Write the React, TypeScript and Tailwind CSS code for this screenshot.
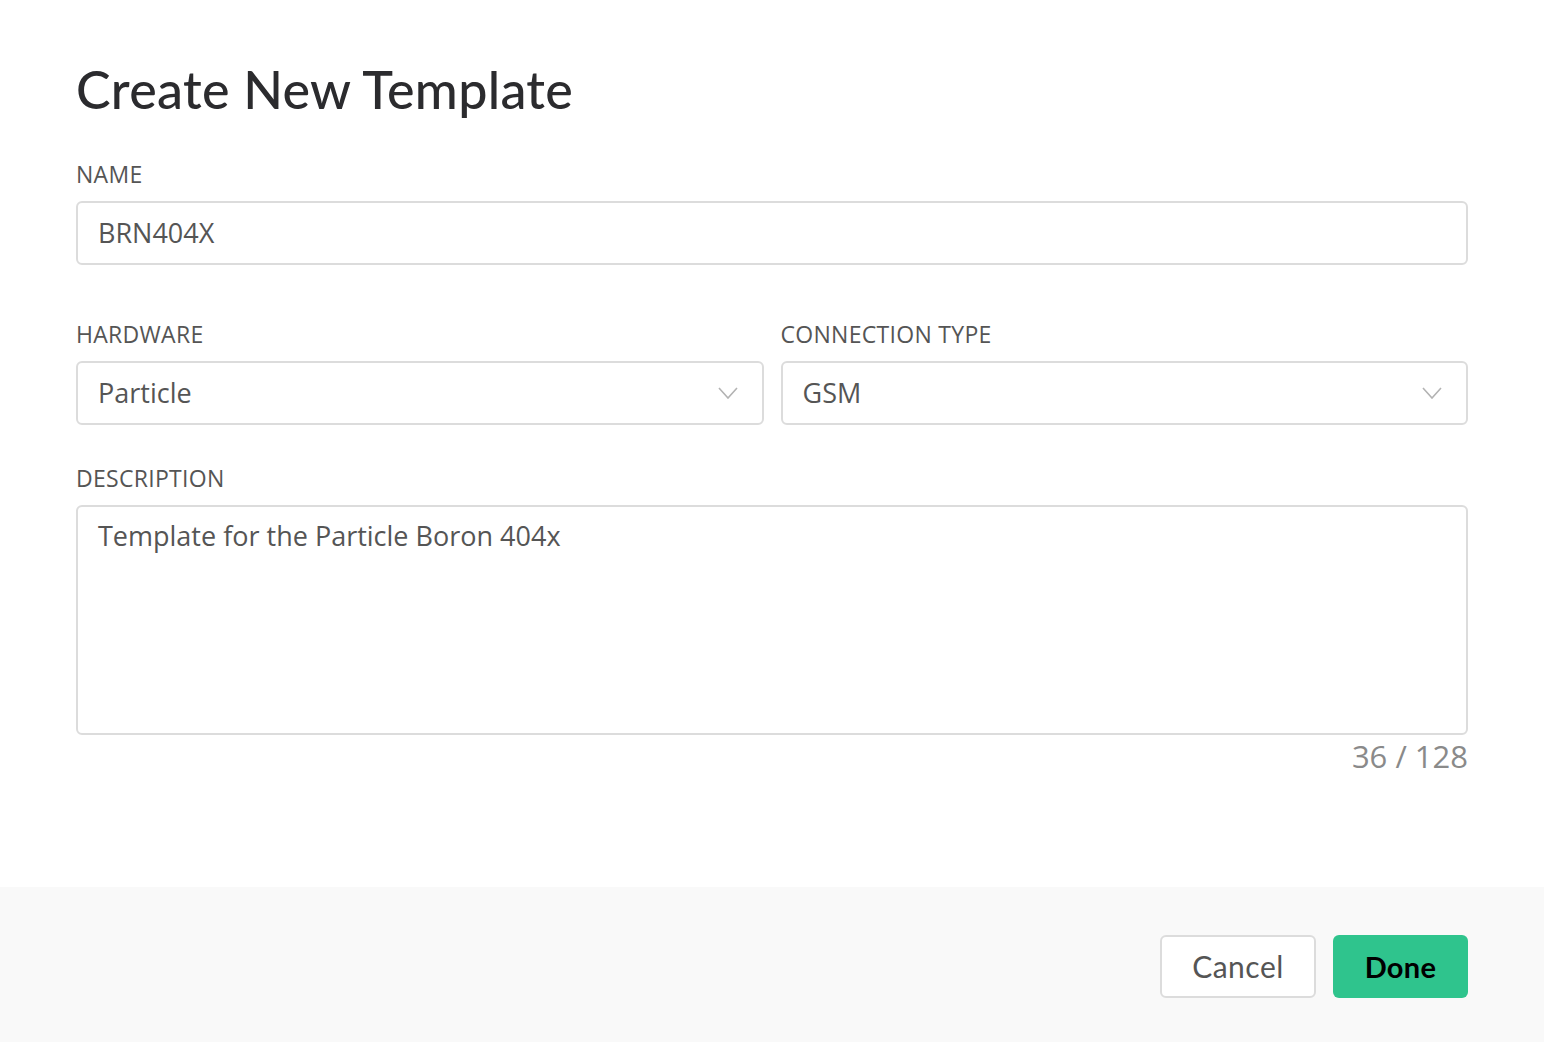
const body = { fontFamily: '"Open Sans", "Noto Sans", sans-serif' }
const head = { fontFamily: 'Lato, "Open Sans", sans-serif' }

function Chevron() {
  return (
    <svg width="20" height="12" viewBox="0 0 20 12" fill="none" className="shrink-0">
      <path d="M1 1l9 10 9-10" stroke="#b3b3b3" strokeWidth="1.6" />
    </svg>
  )
}

function Label({ children }: { children: string }) {
  return <div className="text-[23px] leading-none text-[#555] mb-[15px] tracking-[0.3px]">{children}</div>
}

function Select({ value }: { value: string }) {
  return (
    <div className="flex items-center justify-between h-[64px] pl-[20px] pr-[24px] border-2 border-[#dcdcdc] rounded-[6px] bg-white">
      <span className="text-[27px] text-[#555]">{value}</span>
      <Chevron />
    </div>
  )
}

export default function App() {
  const text = 'Template for the Particle Boron 404x'
  return (
    <div className="w-[1544px] h-[1042px] bg-white flex flex-col" style={body}>
      <div className="flex-1 px-[76px] pt-[63px]">
        <h1 className="text-[52px] leading-none font-medium text-[#2b2b2e] mb-[48px] tracking-[0.3px]" style={head}>
          Create New Template
        </h1>

        <Label>NAME</Label>
        <div className="flex items-center h-[64px] px-[20px] border-2 border-[#dcdcdc] rounded-[6px]">
          <span className="text-[27px] text-[#555]">BRN404X</span>
        </div>

        <div className="grid grid-cols-2 gap-[17px] mt-[58px]">
          <div>
            <Label>HARDWARE</Label>
            <Select value="Particle" />
          </div>
          <div>
            <Label>CONNECTION TYPE</Label>
            <Select value="GSM" />
          </div>
        </div>

        <div className="mt-[42px]">
          <Label>DESCRIPTION</Label>
          <div className="h-[230px] px-[20px] pt-[9px] border-2 border-[#dcdcdc] rounded-[6px]">
            <span className="text-[27px] text-[#555]">{text}</span>
          </div>
          <div className="text-right text-[31px] leading-none text-[#8a8a8a] mt-[6px]">
            {text.length} / 128
          </div>
        </div>
      </div>

      <div className="h-[155px] bg-[#f9f9f9] flex items-center justify-end gap-[17px] px-[76px] pt-[4px]">
        <button
          className="h-[63px] w-[156px] rounded-[6px] border-2 border-[#dcdcdc] bg-white text-[30px] text-[#555] tracking-[0.5px]"
          style={head}
        >
          Cancel
        </button>
        <button
          className="h-[63px] w-[135px] rounded-[6px] bg-[#2fc48d] text-[29px] font-bold text-black tracking-[0.3px]"
          style={head}
        >
          Done
        </button>
      </div>
    </div>
  )
}
